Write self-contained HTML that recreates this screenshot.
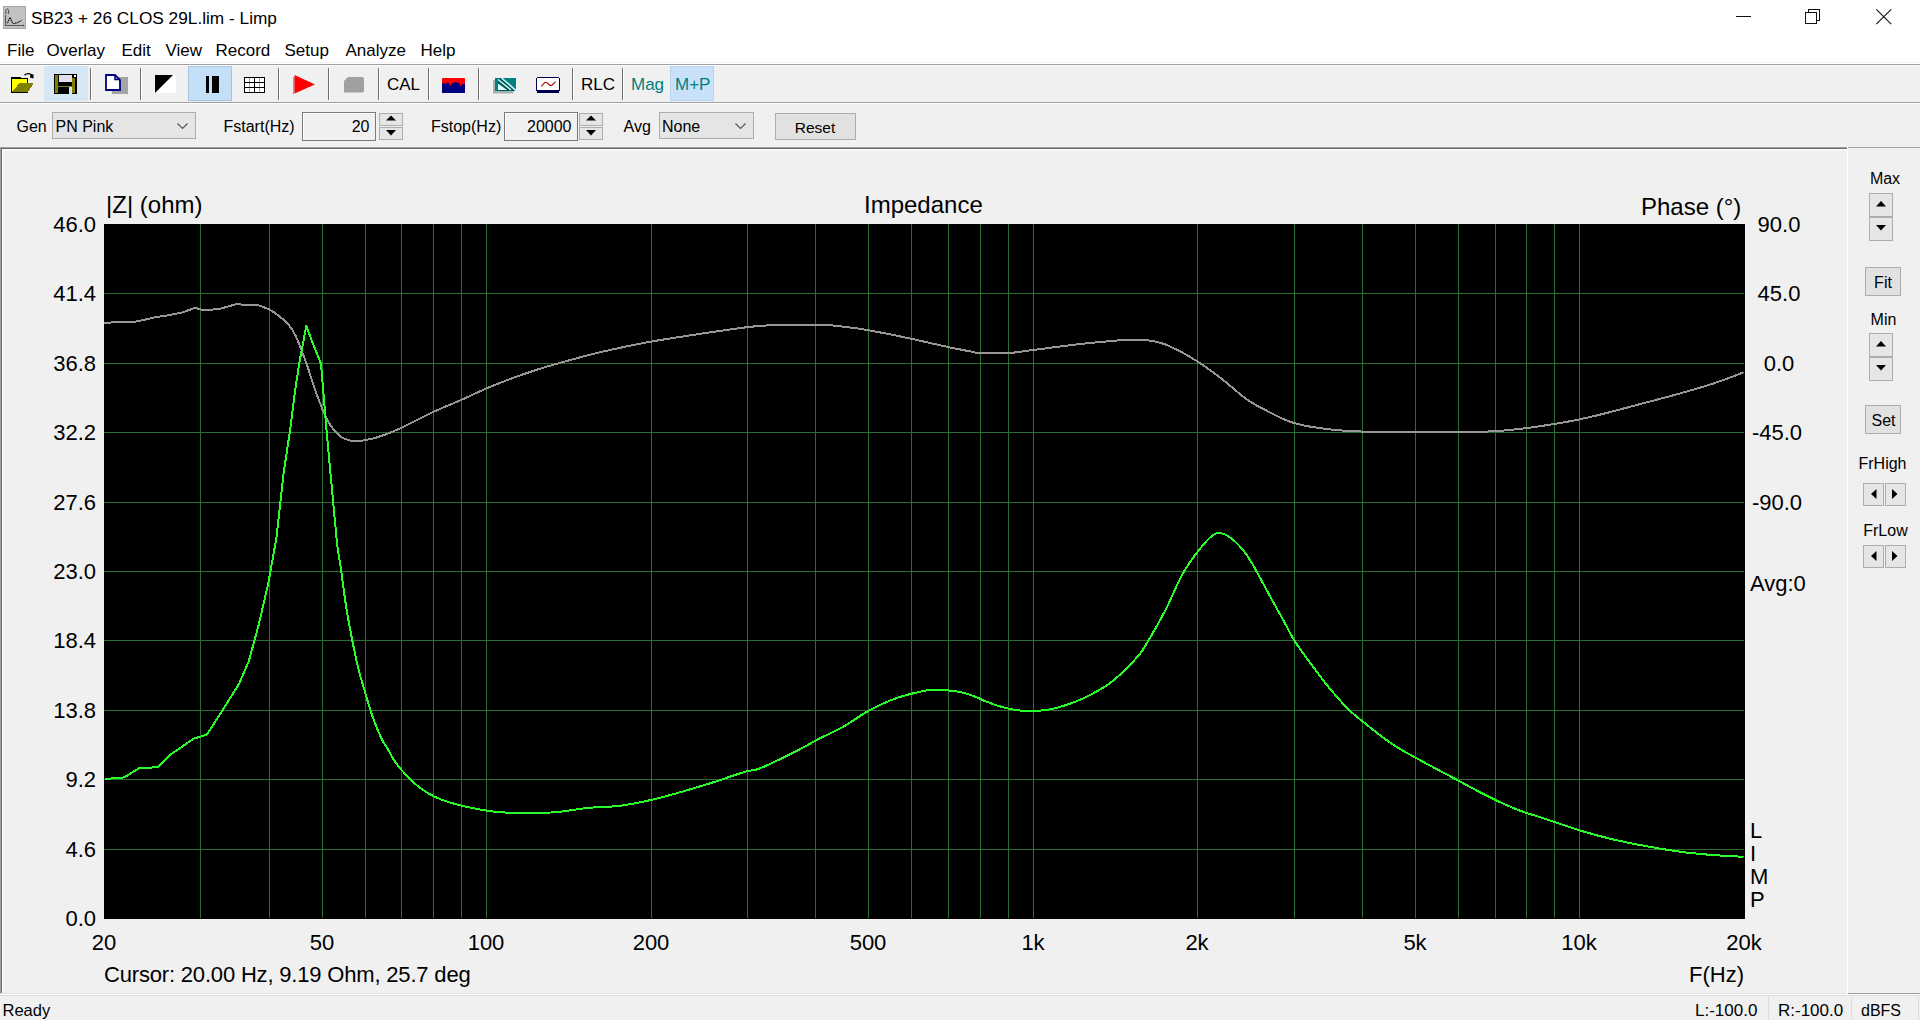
<!DOCTYPE html>
<html><head><meta charset="utf-8">
<style>
*{margin:0;padding:0;box-sizing:border-box}
html,body{width:1920px;height:1020px;overflow:hidden;background:#f0f0f0;font-family:"Liberation Sans",sans-serif;color:#000}
.a,.t{position:absolute}
.t{white-space:nowrap;line-height:normal}
.combo{position:absolute;background:#e5e5e5;border:1px solid #adadad}
.edit{position:absolute;background:#f0f0f0;border:1px solid #7a7a7a;box-shadow:inset 1px 1px 0 #fff}
.spin{position:absolute;background:#e6e6e6;border:1px solid #adadad}
.btn{position:absolute;background:#e1e1e1;border:1px solid #adadad}
svg{position:absolute;overflow:visible}
</style></head><body>

<div class="a" style="left:0;top:0;width:1920px;height:64px;background:#fff"></div>
<div class="a" style="left:0;top:62px;width:1920px;height:1px;background:#f4f4f4"></div>
<svg style="left:3px;top:6px" width="23" height="23" viewBox="0 0 23 23">
<rect x="0" y="0" width="23" height="23" fill="#c2c2c2"/>
<rect x="0.5" y="0.5" width="22" height="22" fill="none" stroke="#a8a8a8" stroke-width="1"/>
<path d="M2.5 9 V19.5 H20.5" stroke="#555" stroke-width="1.1" fill="none"/>
<path d="M20 18.5 L21.5 19.5 L20 20.5 Z" fill="#333"/>
<path d="M4.4 17.3 L7 11.4 L9.6 17.3 L11.7 17.6 L14.6 16.6 L18.5 14.4" stroke="#222" stroke-width="1.3" fill="none" stroke-dasharray="1.6 0.6"/>
<path d="M2.3 7.2 L3.3 7.2 Q2.2 5.8 2.8 4.3 Q3.6 2.8 4.5 3 Q5.6 3.2 5.8 4.8 Q5.8 6.2 5 7.2 L6.2 7.2" stroke="#444" stroke-width="1" fill="none"/>
</svg>
<div class="t" style="left:31px;top:8px;font-size:17.25px;">SB23 + 26 CLOS 29L.lim - Limp</div>
<div class="a" style="left:1736px;top:16px;width:15px;height:1px;background:#111"></div>
<svg style="left:1805px;top:9px" width="16" height="16" viewBox="0 0 16 16" shape-rendering="crispEdges">
<path d="M3.5 3.5 V0.5 H14.5 V11.5 H11.5" fill="none" stroke="#111" stroke-width="1"/>
<rect x="0.5" y="3.5" width="11" height="11" fill="none" stroke="#111" stroke-width="1"/>
</svg>
<svg style="left:1876px;top:9px" width="16" height="16" viewBox="0 0 16 16"><path d="M0.3 0.3 L15.2 15.2 M15.2 0.3 L0.3 15.2" stroke="#111" stroke-width="1.1"/></svg>
<div class="t" style="left:7px;top:41px;font-size:17px;">File</div>
<div class="t" style="left:46.5px;top:41px;font-size:17px;">Overlay</div>
<div class="t" style="left:121.5px;top:41px;font-size:17px;">Edit</div>
<div class="t" style="left:165.5px;top:41px;font-size:17px;">View</div>
<div class="t" style="left:215.5px;top:41px;font-size:17px;">Record</div>
<div class="t" style="left:284.5px;top:41px;font-size:17px;">Setup</div>
<div class="t" style="left:345.5px;top:41px;font-size:17px;">Analyze</div>
<div class="t" style="left:420.5px;top:41px;font-size:17px;">Help</div>
<div class="a" style="left:0;top:64px;width:1920px;height:1px;background:#a0a0a0"></div>
<div class="a" style="left:0;top:65px;width:1920px;height:1px;background:#fff"></div>
<div class="a" style="left:0;top:102px;width:1920px;height:1px;background:#a0a0a0"></div>
<div class="a" style="left:0;top:103px;width:1920px;height:1px;background:#fff"></div>
<div class="a" style="left:44px;top:66px;width:44px;height:35px;background:#d5e6f5"></div>
<div class="a" style="left:188px;top:66px;width:44px;height:35px;background:#c4e0f8;border:1px solid #a8c4dc"></div>
<div class="a" style="left:670px;top:66px;width:44px;height:35px;background:#c8e1f8;border:1px solid #b8d4ee"></div>
<div class="a" style="left:90px;top:68px;width:1px;height:32px;background:#707070"></div>
<div class="a" style="left:91px;top:68px;width:1px;height:32px;background:#fff"></div>
<div class="a" style="left:140px;top:68px;width:1px;height:32px;background:#707070"></div>
<div class="a" style="left:141px;top:68px;width:1px;height:32px;background:#fff"></div>
<div class="a" style="left:278px;top:68px;width:1px;height:32px;background:#707070"></div>
<div class="a" style="left:279px;top:68px;width:1px;height:32px;background:#fff"></div>
<div class="a" style="left:328px;top:68px;width:1px;height:32px;background:#707070"></div>
<div class="a" style="left:329px;top:68px;width:1px;height:32px;background:#fff"></div>
<div class="a" style="left:378px;top:68px;width:1px;height:32px;background:#707070"></div>
<div class="a" style="left:379px;top:68px;width:1px;height:32px;background:#fff"></div>
<div class="a" style="left:428px;top:68px;width:1px;height:32px;background:#707070"></div>
<div class="a" style="left:429px;top:68px;width:1px;height:32px;background:#fff"></div>
<div class="a" style="left:478px;top:68px;width:1px;height:32px;background:#707070"></div>
<div class="a" style="left:479px;top:68px;width:1px;height:32px;background:#fff"></div>
<div class="a" style="left:572px;top:68px;width:1px;height:32px;background:#707070"></div>
<div class="a" style="left:573px;top:68px;width:1px;height:32px;background:#fff"></div>
<div class="a" style="left:622px;top:68px;width:1px;height:32px;background:#707070"></div>
<div class="a" style="left:623px;top:68px;width:1px;height:32px;background:#fff"></div>
<svg style="left:11px;top:73px" width="24" height="21" viewBox="0 0 24 21" shape-rendering="crispEdges">
<path d="M0.5 4.5 H9.5 V5.5 H16.5 V19.5 H0.5 Z" fill="#ffff00" stroke="#000" stroke-width="1"/>
<rect x="0" y="4" width="9" height="2" fill="#000"/>
<path d="M1.5 18.5 L9 9.5 L23 9.5 L17.5 18.5 Z" fill="#808000"/>
<path d="M1 19.5 H17" stroke="#000" stroke-width="1.5"/>
</svg>
<svg style="left:11px;top:73px" width="24" height="21" viewBox="0 0 24 21">
<path d="M13.5 2.2 Q16.5 -0.8 20.5 1.8" fill="none" stroke="#000" stroke-width="1.3"/>
<path d="M19.5 1 L22.5 1.5 L22.5 5.5 L19 4.5 Z" fill="#000"/>
</svg>
<svg style="left:54px;top:74px" width="23" height="20" viewBox="0 0 23 20" shape-rendering="crispEdges">
<rect x="0" y="0" width="23" height="20" fill="#000"/>
<rect x="1" y="1" width="3" height="18" fill="#808000"/>
<rect x="18" y="4" width="3" height="15" fill="#808000"/>
<rect x="5" y="1" width="13" height="7" fill="#e0e0ea"/>
<rect x="4" y="12" width="14" height="1" fill="#808000"/>
<rect x="15" y="13" width="3" height="7" fill="#d5e6f5"/>
<rect x="20" y="1" width="2" height="2" fill="#fff"/>
</svg>
<svg style="left:105px;top:74px" width="24" height="21" viewBox="0 0 24 21" shape-rendering="crispEdges">
<rect x="7" y="3" width="16" height="17" fill="#a4a4a4"/>
</svg>
<svg style="left:105px;top:74px" width="24" height="21" viewBox="0 0 24 21">
<path d="M1 1 H10 L15 6 V16 H1 Z" fill="#fff" stroke="#000080" stroke-width="1.8" stroke-linejoin="miter"/>
<path d="M10 1 V5.5 H15" fill="none" stroke="#000080" stroke-width="1.6"/>
</svg>
<svg style="left:155px;top:75px" width="21" height="18" viewBox="0 0 21 18">
<rect x="0" y="0" width="21" height="18" fill="#fff"/>
<path d="M0 0 L18 0 L0 18 Z" fill="#000"/>
</svg>
<div class="a" style="left:206px;top:76px;width:3px;height:17px;background:#000"></div>
<div class="a" style="left:212px;top:76px;width:7px;height:17px;background:#000"></div>
<svg style="left:244px;top:77px" width="21" height="16" viewBox="0 0 21 16" shape-rendering="crispEdges">
<rect x="0" y="0" width="21" height="16" fill="#fff"/>
<rect x="5" y="1" width="1" height="14" fill="#a0a0a0"/><rect x="15" y="1" width="1" height="14" fill="#a0a0a0"/>
<path d="M0 0.5H21M0 5.5H21M0 10.5H21M0 15.5H21M0.5 0V16M10.5 0V16M20.5 0V16" stroke="#000" stroke-width="1.3" fill="none"/>
</svg>
<svg style="left:293px;top:75px" width="22" height="19" viewBox="0 0 22 19">
<rect x="0" y="2" width="1.5" height="17" fill="#b09090"/>
<path d="M1.5 0 L22 9.5 L1.5 18.5 Z" fill="#ff0000"/>
</svg>
<svg style="left:344px;top:77px" width="20" height="16" viewBox="0 0 20 16">
<path d="M4 0 H18 Q20 0 20 2 V13.5 Q20 15.5 18 15.5 H0 V4 Z" fill="#a0a0a0"/>
</svg>
<div class="t" style="left:387px;top:75px;font-size:17px;">CAL</div>
<svg style="left:442px;top:78px" width="23" height="15" viewBox="0 0 23 15">
<rect x="0" y="0" width="23" height="15" rx="1" fill="#ff0000"/>
<path d="M0 15 V5.5 L2 5 L4 6 L5.5 4 L7 5 L8 8.5 L9.5 6 L11 5 L12.5 4.5 L14 4 L15.5 5 L17 4.5 L18.5 8.5 L20 6 L21.5 6 L23 5.5 V15 Z" fill="#000080"/>
</svg>
<svg style="left:493px;top:78px" width="24" height="16" viewBox="0 0 24 16">
<path d="M0 2.2 H2 V13 H20.5 V15.4 H0 Z" fill="#a3b2b2"/>
<rect x="2" y="0" width="21" height="13" fill="#008080"/>
<path d="M5 1.2 L8.5 0 L23 12.5 V13 H19 L5 2.5 Z" fill="#005a5a"/>
<path d="M5 2.5 L19 13 H5 Z" fill="#005a5a"/>
<path d="M8.6 0 L23 12.6" stroke="#d8ffff" stroke-width="1.5"/>
<path d="M5 1.6 L18 12" stroke="#d8ffff" stroke-width="1.3"/>
<path d="M5 5.4 L14 12 H5 Z" fill="#e6ffff"/>
</svg>
<svg style="left:536px;top:77px" width="24" height="16" viewBox="0 0 24 16" shape-rendering="crispEdges">
<path d="M1 0 H23 V1 H24 V14 H23 V16 H1 V14 H0 V1 H1 Z" fill="#000050"/>
<rect x="1" y="1" width="22" height="12" fill="#fff"/>
</svg>
<svg style="left:536px;top:77px" width="24" height="16" viewBox="0 0 24 16">
<path d="M5.3 9.3 L8.7 5.5 L10.8 5.5 L13.8 8.3 L15.8 8.3 L19.6 4.6" fill="none" stroke="#b01515" stroke-width="1.2"/>
</svg>
<div class="t" style="left:581px;top:75px;font-size:17px;">RLC</div>
<div class="t" style="left:631px;top:75px;font-size:17px;color:#008080;">Mag</div>
<div class="t" style="left:675px;top:75px;font-size:17px;color:#008080;">M+P</div>
<div class="t" style="left:16.5px;top:118px;font-size:16px;">Gen</div>
<div class="combo" style="left:52px;top:112px;width:144px;height:27px"></div>
<div class="t" style="left:55.5px;top:118px;font-size:16px;">PN Pink</div>
<svg style="left:177px;top:123px" width="11" height="6" viewBox="0 0 11 6"><path d="M0.5 0.5 L5.5 5.5 L10.5 0.5" fill="none" stroke="#505050" stroke-width="1.1"/></svg>
<div class="t" style="left:223.5px;top:118px;font-size:16px;">Fstart(Hz)</div>
<div class="edit" style="left:302px;top:112px;width:74px;height:29px"></div>
<div class="t" style="left:69.5px;width:300px;text-align:right;top:118px;font-size:16px;">20</div>
<div class="spin" style="left:379px;top:113px;width:24px;height:13px"></div>
<div class="spin" style="left:379px;top:127px;width:24px;height:13px"></div>
<svg style="left:386px;top:114.5px" width="10" height="6"><path d="M0 5.5 L5 0.5 L10 5.5 Z" fill="#000"/></svg>
<svg style="left:386px;top:130px" width="10" height="6"><path d="M0 0 L5 5.5 L10 0 Z" fill="#000"/></svg>
<div class="spin" style="left:579px;top:113px;width:24px;height:13px"></div>
<div class="spin" style="left:579px;top:127px;width:24px;height:13px"></div>
<svg style="left:586px;top:114.5px" width="10" height="6"><path d="M0 5.5 L5 0.5 L10 5.5 Z" fill="#000"/></svg>
<svg style="left:586px;top:130px" width="10" height="6"><path d="M0 0 L5 5.5 L10 0 Z" fill="#000"/></svg>
<div class="t" style="left:431px;top:118px;font-size:16px;">Fstop(Hz)</div>
<div class="edit" style="left:504px;top:112px;width:74px;height:29px"></div>
<div class="t" style="left:271.5px;width:300px;text-align:right;top:118px;font-size:16px;">20000</div>
<div class="t" style="left:623.5px;top:118px;font-size:16px;">Avg</div>
<div class="combo" style="left:659px;top:112px;width:95px;height:27px"></div>
<div class="t" style="left:662px;top:118px;font-size:16px;">None</div>
<svg style="left:735px;top:123px" width="11" height="6" viewBox="0 0 11 6"><path d="M0.5 0.5 L5.5 5.5 L10.5 0.5" fill="none" stroke="#505050" stroke-width="1.1"/></svg>
<div class="btn" style="left:775px;top:113px;width:81px;height:27px"></div>
<div class="t" style="left:715px;width:200px;text-align:center;top:119px;font-size:15.5px;">Reset</div>
<div class="a" style="left:0;top:147px;width:1847px;height:1px;background:#a0a0a0"></div>
<div class="a" style="left:1px;top:148px;width:1846px;height:1px;background:#696969"></div>
<div class="a" style="left:2px;top:149px;width:1845px;height:1px;background:#fff"></div>
<div class="a" style="left:0;top:147px;width:1px;height:847px;background:#a0a0a0"></div>
<div class="a" style="left:1px;top:148px;width:1px;height:845px;background:#696969"></div>
<div class="a" style="left:2px;top:149px;width:1px;height:844px;background:#fff"></div>
<div class="a" style="left:1847px;top:148px;width:1px;height:846px;background:#fff"></div>
<div class="a" style="left:0;top:993px;width:1847px;height:1px;background:#e3e3e3"></div>
<div class="a" style="left:0;top:994px;width:1920px;height:1px;background:#fff"></div>
<div class="a" style="left:1848px;top:147px;width:72px;height:1px;background:#a0a0a0"></div>
<div class="a" style="left:1848px;top:993px;width:72px;height:1px;background:#a0a0a0"></div>
<svg style="left:0;top:0" width="1920" height="1020">
<rect x="104" y="224" width="1641" height="695" fill="#000"/>
<path d="M200.5 224V918M269.5 224V918M322.5 224V918M365.5 224V918M401.5 224V918M433.5 224V918M461.5 224V918M486.5 224V918M651.5 224V918M747.5 224V918M815.5 224V918M868.5 224V918M911.5 224V918M948.5 224V918M980.5 224V918M1008.5 224V918M1033.5 224V918M1197.5 224V918M1294.5 224V918M1362.5 224V918M1415.5 224V918M1458.5 224V918M1495.5 224V918M1526.5 224V918M1554.5 224V918M1579.5 224V918M104 293.5H1744M104 363.5H1744M104 432.5H1744M104 502.5H1744M104 571.5H1744M104 640.5H1744M104 710.5H1744M104 779.5H1744M104 849.5H1744" stroke="#2c6e32" stroke-width="1" shape-rendering="crispEdges" fill="none"/>
<polyline fill="none" stroke="#969696" stroke-width="2" stroke-linejoin="round" shape-rendering="crispEdges" points="104.3,322.7 121.6,322.2 135.3,321.6 147.0,319.2 156.9,316.9 168.6,315.3 182.4,312.4 195.1,307.8 202.0,309.8 217.6,309.4 237.3,303.9 247.0,305.5 256.9,304.7 268.6,309.0 270.8,310.3 273.2,311.8 275.6,313.4 278.0,315.2 280.4,317.1 282.6,319.0 284.6,320.9 286.6,322.8 288.4,324.7 290.2,326.9 292.1,329.5 293.9,332.6 295.8,336.3 297.6,340.4 299.5,344.9 301.4,349.7 303.2,354.6 305.1,359.7 307.0,365.0 308.9,370.7 310.7,376.6 312.6,382.5 314.5,388.2 316.4,393.5 318.3,398.5 320.2,403.5 322.0,408.2 323.9,412.7 325.8,416.9 327.7,420.6 329.6,423.9 331.5,426.8 333.4,429.3 335.2,431.6 337.1,433.5 339.0,435.3 340.9,436.8 342.8,437.9 344.7,438.8 346.6,439.5 348.5,440.0 350.3,440.5 352.0,440.9 353.6,441.1 355.2,441.2 356.8,441.2 358.6,441.0 360.8,440.8 363.3,440.4 366.0,440.0 368.9,439.4 371.9,438.7 375.1,437.9 378.4,436.9 381.8,435.8 385.2,434.6 388.7,433.2 392.5,431.7 396.5,430.0 400.8,428.1 405.5,425.9 410.6,423.3 415.9,420.6 421.3,417.8 426.8,415.1 432.1,412.5 437.4,410.1 442.8,407.7 448.2,405.4 453.5,403.2 458.6,401.1 463.3,399.0 467.5,397.1 471.3,395.3 474.9,393.6 478.4,392.0 482.2,390.3 486.2,388.5 490.7,386.6 495.4,384.7 500.3,382.8 505.3,380.9 510.3,379.0 515.4,377.1 520.4,375.3 525.3,373.6 530.3,371.9 535.4,370.2 540.9,368.5 546.7,366.7 553.2,364.8 560.2,362.8 567.5,360.8 574.8,358.8 581.8,356.9 588.3,355.2 594.1,353.7 599.5,352.4 604.6,351.2 609.6,350.1 614.5,349.0 619.6,347.9 624.7,346.8 629.6,345.8 634.6,344.8 639.6,343.8 645.0,342.7 650.8,341.7 657.0,340.6 663.5,339.5 670.3,338.4 677.4,337.3 684.8,336.2 692.5,335.0 700.8,333.7 709.8,332.4 719.2,331.0 728.3,329.7 737.0,328.5 744.6,327.5 750.9,326.8 756.3,326.2 761.0,325.8 765.7,325.5 770.8,325.2 776.7,325.0 783.8,324.8 791.9,324.8 800.3,324.7 808.6,324.8 816.2,324.9 822.5,325.0 827.4,325.2 831.1,325.4 834.2,325.6 837.0,325.9 839.9,326.3 843.3,326.7 847.0,327.1 850.7,327.6 854.5,328.0 858.6,328.6 863.1,329.3 868.3,330.2 874.3,331.3 881.1,332.6 888.4,334.0 895.8,335.5 903.1,337.1 910.0,338.5 916.7,339.9 923.4,341.5 930.1,343.0 936.4,344.4 942.3,345.7 947.5,346.9 952.0,347.9 956.0,348.7 959.5,349.3 962.6,349.9 965.5,350.5 968.3,351.0 970.7,351.5 972.5,351.9 974.2,352.3 975.9,352.6 978.0,352.9 980.8,353.1 984.5,353.3 988.8,353.4 993.6,353.4 998.5,353.4 1003.3,353.3 1007.9,353.1 1012.1,352.8 1016.2,352.3 1020.3,351.8 1024.3,351.2 1028.5,350.6 1032.9,350.0 1037.5,349.4 1042.2,348.8 1047.1,348.2 1052.0,347.5 1057.0,346.9 1062.0,346.2 1067.0,345.6 1071.9,345.0 1076.9,344.4 1082.0,343.8 1087.5,343.3 1093.3,342.7 1099.8,342.1 1107.1,341.4 1114.6,340.7 1122.0,340.2 1128.9,339.8 1135.0,339.6 1140.1,339.7 1144.6,340.0 1148.6,340.4 1152.3,341.0 1155.8,341.7 1159.4,342.6 1162.9,343.6 1166.2,344.8 1169.4,346.1 1172.4,347.6 1175.5,349.1 1178.7,350.7 1181.9,352.3 1185.0,354.1 1188.2,355.8 1191.4,357.8 1194.7,359.8 1198.1,362.0 1201.6,364.3 1205.3,366.8 1209.0,369.4 1212.8,372.2 1216.7,375.1 1220.7,378.1 1224.9,381.4 1229.2,385.0 1233.7,388.8 1238.1,392.5 1242.4,396.0 1246.6,399.1 1250.5,401.7 1254.3,404.1 1257.9,406.2 1261.6,408.1 1265.3,410.0 1269.2,412.0 1273.2,414.0 1277.1,416.1 1281.1,418.1 1285.3,419.9 1289.9,421.7 1295.0,423.3 1300.6,424.7 1306.6,426.0 1312.9,427.1 1319.6,428.1 1326.5,429.0 1333.7,429.8 1340.8,430.4 1347.9,430.9 1355.3,431.3 1363.3,431.6 1372.1,431.8 1382.2,432.0 1394.2,432.2 1407.9,432.2 1422.6,432.3 1437.2,432.2 1450.9,432.2 1462.9,432.0 1472.6,431.8 1480.8,431.7 1488.1,431.5 1495.2,431.2 1502.7,430.6 1511.3,429.8 1521.1,428.7 1531.6,427.4 1542.6,425.8 1553.8,424.1 1564.9,422.2 1575.9,420.1 1586.7,417.8 1597.4,415.3 1608.2,412.6 1619.0,409.7 1629.7,406.9 1640.5,404.0 1651.6,401.1 1663.0,398.0 1674.4,395.0 1685.4,391.9 1695.7,389.0 1705.0,386.2 1713.4,383.5 1721.3,380.8 1728.4,378.1 1734.7,375.8 1739.9,373.8 1743.8,372.3"/>
<polyline fill="none" stroke="#28ff28" stroke-width="2" stroke-linejoin="round" shape-rendering="crispEdges" points="104.9,779.0 124.3,777.4 138.8,768.4 158.3,767.1 171.2,754.1 193.9,738.6 206.8,734.7 223.0,709.5 239.2,683.6 248.9,660.9 258.6,625.3 268.3,583.3 276.4,538.0 283.7,472.5 290.5,427.4 295.0,391.3 299.5,361.9 306.3,325.8 313.0,343.9 321.0,363.7 325.5,418.4 330.0,468.0 336.7,540.0 337.5,547.3 338.3,552.6 338.9,556.8 339.6,560.6 340.3,564.9 341.1,570.3 342.0,576.9 343.0,584.2 344.0,591.8 345.1,599.7 346.3,607.7 347.6,615.6 349.1,623.7 350.7,632.3 352.4,640.9 354.1,649.3 355.7,657.2 357.3,664.2 358.7,670.2 360.1,675.5 361.5,680.2 362.8,684.6 364.1,688.9 365.4,693.3 366.8,697.9 368.1,702.4 369.4,706.9 370.8,711.2 372.1,715.3 373.5,719.2 374.9,722.9 376.3,726.4 377.6,729.8 379.0,733.0 380.3,735.9 381.6,738.6 382.8,740.9 383.8,742.8 384.8,744.5 385.8,746.1 387.0,747.9 388.3,750.0 389.7,752.4 391.1,755.0 392.6,757.8 394.4,760.6 396.4,763.6 398.8,766.7 401.6,770.0 404.9,773.6 408.4,777.4 412.1,781.0 415.9,784.5 419.6,787.5 423.2,790.1 426.8,792.4 430.4,794.5 434.2,796.5 438.2,798.3 442.5,800.0 447.2,801.7 452.3,803.2 457.6,804.7 463.0,806.0 468.4,807.2 473.8,808.3 478.8,809.3 483.6,810.2 488.5,810.9 493.5,811.6 498.9,812.1 505.0,812.5 511.9,812.8 519.5,813.0 527.5,813.0 535.6,813.0 543.5,812.8 550.8,812.5 557.6,812.0 564.1,811.2 570.5,810.3 576.6,809.4 582.5,808.6 588.3,807.9 593.9,807.4 599.2,807.2 604.3,806.9 609.4,806.7 614.5,806.3 619.6,805.8 624.8,805.1 630.0,804.2 635.2,803.3 640.4,802.3 645.6,801.2 650.8,800.0 656.0,798.8 661.2,797.5 666.4,796.1 671.6,794.6 676.8,793.2 682.0,791.7 687.2,790.2 692.4,788.7 697.6,787.1 702.9,785.5 708.1,783.9 713.3,782.3 718.7,780.5 724.3,778.7 729.9,776.7 735.3,774.9 740.3,773.3 744.6,771.9 747.9,771.0 750.2,770.6 752.2,770.4 754.1,770.1 756.6,769.5 760.0,768.3 764.6,766.4 770.1,763.9 776.0,761.1 782.2,758.2 788.0,755.3 793.3,752.7 797.9,750.3 802.2,748.0 806.3,745.8 810.3,743.5 814.2,741.4 818.3,739.2 822.5,737.1 826.6,735.1 830.8,733.1 835.0,731.1 839.1,729.0 843.3,726.7 847.4,724.2 851.6,721.6 855.7,718.9 859.8,716.1 864.0,713.5 868.3,711.0 872.7,708.7 877.2,706.4 881.7,704.2 886.3,702.2 890.9,700.2 895.4,698.5 900.1,696.9 904.9,695.5 909.7,694.2 914.4,693.0 918.7,692.1 922.5,691.2 925.6,690.6 928.0,690.2 930.1,690.0 932.2,689.8 934.4,689.8 937.0,689.8 940.2,689.9 943.7,690.1 947.4,690.4 951.1,690.7 954.7,691.2 958.0,691.7 961.0,692.3 963.9,693.0 966.7,693.8 969.4,694.7 972.0,695.6 974.6,696.5 977.1,697.5 979.4,698.5 981.6,699.5 983.9,700.6 986.4,701.6 989.2,702.7 992.3,703.8 995.7,705.0 999.2,706.1 1002.8,707.2 1006.5,708.2 1010.0,709.0 1013.5,709.6 1016.9,710.1 1020.4,710.5 1023.9,710.8 1027.3,710.9 1030.8,711.0 1034.3,710.9 1037.8,710.8 1041.2,710.5 1044.7,710.1 1048.2,709.6 1051.7,709.0 1055.2,708.2 1058.6,707.3 1062.1,706.3 1065.6,705.2 1069.0,704.0 1072.5,702.7 1076.0,701.4 1079.4,699.9 1082.9,698.5 1086.4,696.9 1089.8,695.1 1093.3,693.3 1096.8,691.4 1100.2,689.4 1103.6,687.4 1107.1,685.1 1110.6,682.6 1114.2,679.8 1118.0,676.5 1122.1,672.7 1126.3,668.6 1130.3,664.6 1134.0,660.6 1137.2,657.1 1139.7,654.1 1141.6,651.6 1143.2,649.2 1144.7,646.7 1146.3,643.9 1148.4,640.4 1150.9,636.3 1153.6,631.6 1156.5,626.7 1159.4,621.4 1162.3,616.0 1165.2,610.6 1168.0,604.9 1170.8,598.7 1173.7,592.4 1176.5,586.2 1179.2,580.4 1181.9,575.2 1184.5,570.6 1187.0,566.6 1189.5,562.8 1191.9,559.4 1194.3,556.1 1196.8,552.8 1199.3,549.5 1202.0,546.3 1204.6,543.2 1207.1,540.4 1209.5,538.0 1211.7,536.1 1213.5,534.7 1215.1,533.8 1216.5,533.2 1217.8,533.0 1219.3,533.0 1221.0,533.3 1222.9,533.8 1225.0,534.6 1227.2,535.7 1229.5,537.1 1231.8,538.8 1234.1,540.7 1236.4,542.9 1238.8,545.3 1241.2,547.9 1243.7,550.9 1246.3,554.4 1249.0,558.4 1251.9,563.1 1254.9,568.4 1258.1,574.2 1261.3,580.1 1264.5,586.1 1267.6,591.9 1270.8,597.7 1274.1,603.7 1277.5,609.8 1280.7,615.5 1283.6,620.9 1286.2,625.5 1288.2,629.2 1289.6,632.0 1290.8,634.3 1292.0,636.6 1293.5,639.1 1295.5,642.2 1298.1,646.1 1301.1,650.4 1304.4,655.0 1307.8,659.7 1311.1,664.2 1314.2,668.3 1317.0,672.0 1319.6,675.6 1322.2,678.9 1324.7,682.2 1327.3,685.5 1330.0,688.8 1332.8,692.1 1335.8,695.6 1338.8,699.0 1341.8,702.4 1344.7,705.5 1347.5,708.4 1350.0,710.9 1352.3,713.0 1354.5,714.9 1356.8,716.8 1359.5,719.0 1362.8,721.6 1366.8,724.8 1371.4,728.5 1376.4,732.4 1381.5,736.3 1386.5,740.0 1391.3,743.4 1395.7,746.3 1400.0,748.9 1404.1,751.4 1408.4,753.7 1412.8,756.2 1417.5,758.8 1422.6,761.6 1427.9,764.5 1433.5,767.4 1439.1,770.4 1444.8,773.4 1450.3,776.3 1455.8,779.2 1461.2,782.2 1466.7,785.2 1472.2,788.1 1477.6,791.0 1483.1,793.8 1488.6,796.5 1494.1,799.2 1499.5,801.9 1505.0,804.4 1510.5,806.8 1516.0,809.1 1521.5,811.2 1526.9,813.1 1532.4,814.8 1537.9,816.5 1543.3,818.2 1548.8,820.0 1554.3,821.9 1559.7,823.7 1565.2,825.6 1570.7,827.5 1576.1,829.3 1581.6,831.0 1587.1,832.6 1592.5,834.1 1598.0,835.6 1603.5,837.0 1608.9,838.4 1614.4,839.7 1619.9,840.9 1625.3,842.1 1630.8,843.2 1636.3,844.3 1641.7,845.3 1647.2,846.3 1652.7,847.3 1658.1,848.3 1663.6,849.2 1669.1,850.1 1674.5,850.9 1680.0,851.7 1685.5,852.4 1691.0,853.0 1696.5,853.6 1702.0,854.1 1707.5,854.6 1712.8,855.0 1718.4,855.4 1724.3,855.8 1730.2,856.1 1735.6,856.4 1740.2,856.6 1743.5,856.8"/>
</svg>
<div class="t" style="left:106px;top:191px;font-size:24px;">|Z| (ohm)</div>
<div class="t" style="left:864px;top:191px;font-size:24px;">Impedance</div>
<div class="t" style="left:1641px;top:193px;font-size:24px;">Phase (°)</div>
<div class="t" style="left:-204px;width:300px;text-align:right;top:212px;font-size:22px;">46.0</div>
<div class="t" style="left:-204px;width:300px;text-align:right;top:281px;font-size:22px;">41.4</div>
<div class="t" style="left:-204px;width:300px;text-align:right;top:351px;font-size:22px;">36.8</div>
<div class="t" style="left:-204px;width:300px;text-align:right;top:420px;font-size:22px;">32.2</div>
<div class="t" style="left:-204px;width:300px;text-align:right;top:490px;font-size:22px;">27.6</div>
<div class="t" style="left:-204px;width:300px;text-align:right;top:559px;font-size:22px;">23.0</div>
<div class="t" style="left:-204px;width:300px;text-align:right;top:628px;font-size:22px;">18.4</div>
<div class="t" style="left:-204px;width:300px;text-align:right;top:698px;font-size:22px;">13.8</div>
<div class="t" style="left:-204px;width:300px;text-align:right;top:767px;font-size:22px;">9.2</div>
<div class="t" style="left:-204px;width:300px;text-align:right;top:837px;font-size:22px;">4.6</div>
<div class="t" style="left:-204px;width:300px;text-align:right;top:906px;font-size:22px;">0.0</div>
<div class="t" style="left:1679px;width:200px;text-align:center;top:212px;font-size:22px;">90.0</div>
<div class="t" style="left:1679px;width:200px;text-align:center;top:281px;font-size:22px;">45.0</div>
<div class="t" style="left:1679px;width:200px;text-align:center;top:351px;font-size:22px;">0.0</div>
<div class="t" style="left:1677px;width:200px;text-align:center;top:420px;font-size:22px;">-45.0</div>
<div class="t" style="left:1677px;width:200px;text-align:center;top:490px;font-size:22px;">-90.0</div>
<div class="t" style="left:4px;width:200px;text-align:center;top:930px;font-size:22px;">20</div>
<div class="t" style="left:222px;width:200px;text-align:center;top:930px;font-size:22px;">50</div>
<div class="t" style="left:386px;width:200px;text-align:center;top:930px;font-size:22px;">100</div>
<div class="t" style="left:551px;width:200px;text-align:center;top:930px;font-size:22px;">200</div>
<div class="t" style="left:768px;width:200px;text-align:center;top:930px;font-size:22px;">500</div>
<div class="t" style="left:933px;width:200px;text-align:center;top:930px;font-size:22px;">1k</div>
<div class="t" style="left:1097px;width:200px;text-align:center;top:930px;font-size:22px;">2k</div>
<div class="t" style="left:1315px;width:200px;text-align:center;top:930px;font-size:22px;">5k</div>
<div class="t" style="left:1479px;width:200px;text-align:center;top:930px;font-size:22px;">10k</div>
<div class="t" style="left:1644px;width:200px;text-align:center;top:930px;font-size:22px;">20k</div>
<div class="t" style="left:1750px;top:571px;font-size:22px;">Avg:0</div>
<div class="t" style="left:1750px;top:818px;font-size:22px;">L</div>
<div class="t" style="left:1750px;top:841px;font-size:22px;">I</div>
<div class="t" style="left:1750px;top:864px;font-size:22px;">M</div>
<div class="t" style="left:1750px;top:887px;font-size:22px;">P</div>
<div class="t" style="left:104px;top:962px;font-size:22px;letter-spacing:-0.18px">Cursor: 20.00 Hz, 9.19 Ohm, 25.7 deg</div>
<div class="t" style="left:1444px;width:300px;text-align:right;top:962px;font-size:22px;">F(Hz)</div>
<div class="t" style="left:1785px;width:200px;text-align:center;top:170px;font-size:16px;">Max</div>
<div class="spin" style="left:1869px;top:193px;width:24px;height:24px"></div>
<div class="spin" style="left:1869px;top:217px;width:24px;height:24px"></div>
<svg style="left:1876px;top:201px" width="10" height="6"><path d="M0 5.5 L5 0 L10 5.5 Z" fill="#000"/></svg>
<svg style="left:1876px;top:225px" width="10" height="6"><path d="M0 0 L5 5.5 L10 0 Z" fill="#000"/></svg>
<div class="btn" style="left:1865px;top:267px;width:36px;height:29px"></div>
<div class="t" style="left:1783px;width:200px;text-align:center;top:274px;font-size:16px;">Fit</div>
<div class="t" style="left:1783.5px;width:200px;text-align:center;top:311px;font-size:16px;">Min</div>
<div class="spin" style="left:1869px;top:333px;width:24px;height:24px"></div>
<div class="spin" style="left:1869px;top:357px;width:24px;height:24px"></div>
<svg style="left:1876px;top:341px" width="10" height="6"><path d="M0 5.5 L5 0 L10 5.5 Z" fill="#000"/></svg>
<svg style="left:1876px;top:365px" width="10" height="6"><path d="M0 0 L5 5.5 L10 0 Z" fill="#000"/></svg>
<div class="btn" style="left:1865px;top:405px;width:36px;height:29px"></div>
<div class="t" style="left:1783.5px;width:200px;text-align:center;top:412px;font-size:16px;">Set</div>
<div class="t" style="left:1782.5px;width:200px;text-align:center;top:455px;font-size:16px;">FrHigh</div>
<div class="spin" style="left:1863px;top:483px;width:21px;height:23px"></div>
<div class="spin" style="left:1885px;top:483px;width:21px;height:23px"></div>
<svg style="left:1871px;top:489px" width="6" height="10"><path d="M5.5 0 L0 5 L5.5 10 Z" fill="#000"/></svg>
<svg style="left:1892px;top:489px" width="6" height="10"><path d="M0 0 L5.5 5 L0 10 Z" fill="#000"/></svg>
<div class="t" style="left:1785.5px;width:200px;text-align:center;top:522px;font-size:16px;">FrLow</div>
<div class="spin" style="left:1863px;top:545px;width:21px;height:23px"></div>
<div class="spin" style="left:1885px;top:545px;width:21px;height:23px"></div>
<svg style="left:1871px;top:551px" width="6" height="10"><path d="M5.5 0 L0 5 L5.5 10 Z" fill="#000"/></svg>
<svg style="left:1892px;top:551px" width="6" height="10"><path d="M0 0 L5.5 5 L0 10 Z" fill="#000"/></svg>
<div class="a" style="left:0;top:995px;width:1920px;height:1px;background:#dcdcdc"></div>
<div class="t" style="left:2.5px;top:1001px;font-size:16.5px;">Ready</div>
<div class="t" style="left:1695px;top:1001px;font-size:17px;">L:-100.0</div>
<div class="a" style="left:1768px;top:997px;width:1px;height:23px;background:#dcdcdc"></div>
<div class="t" style="left:1778px;top:1001px;font-size:17px;">R:-100.0</div>
<div class="a" style="left:1851px;top:997px;width:1px;height:23px;background:#dcdcdc"></div>
<div class="t" style="left:1861px;top:1002px;font-size:16px;">dBFS</div>
<div class="a" style="left:1918px;top:997px;width:1px;height:23px;background:#dcdcdc"></div>
</body></html>
